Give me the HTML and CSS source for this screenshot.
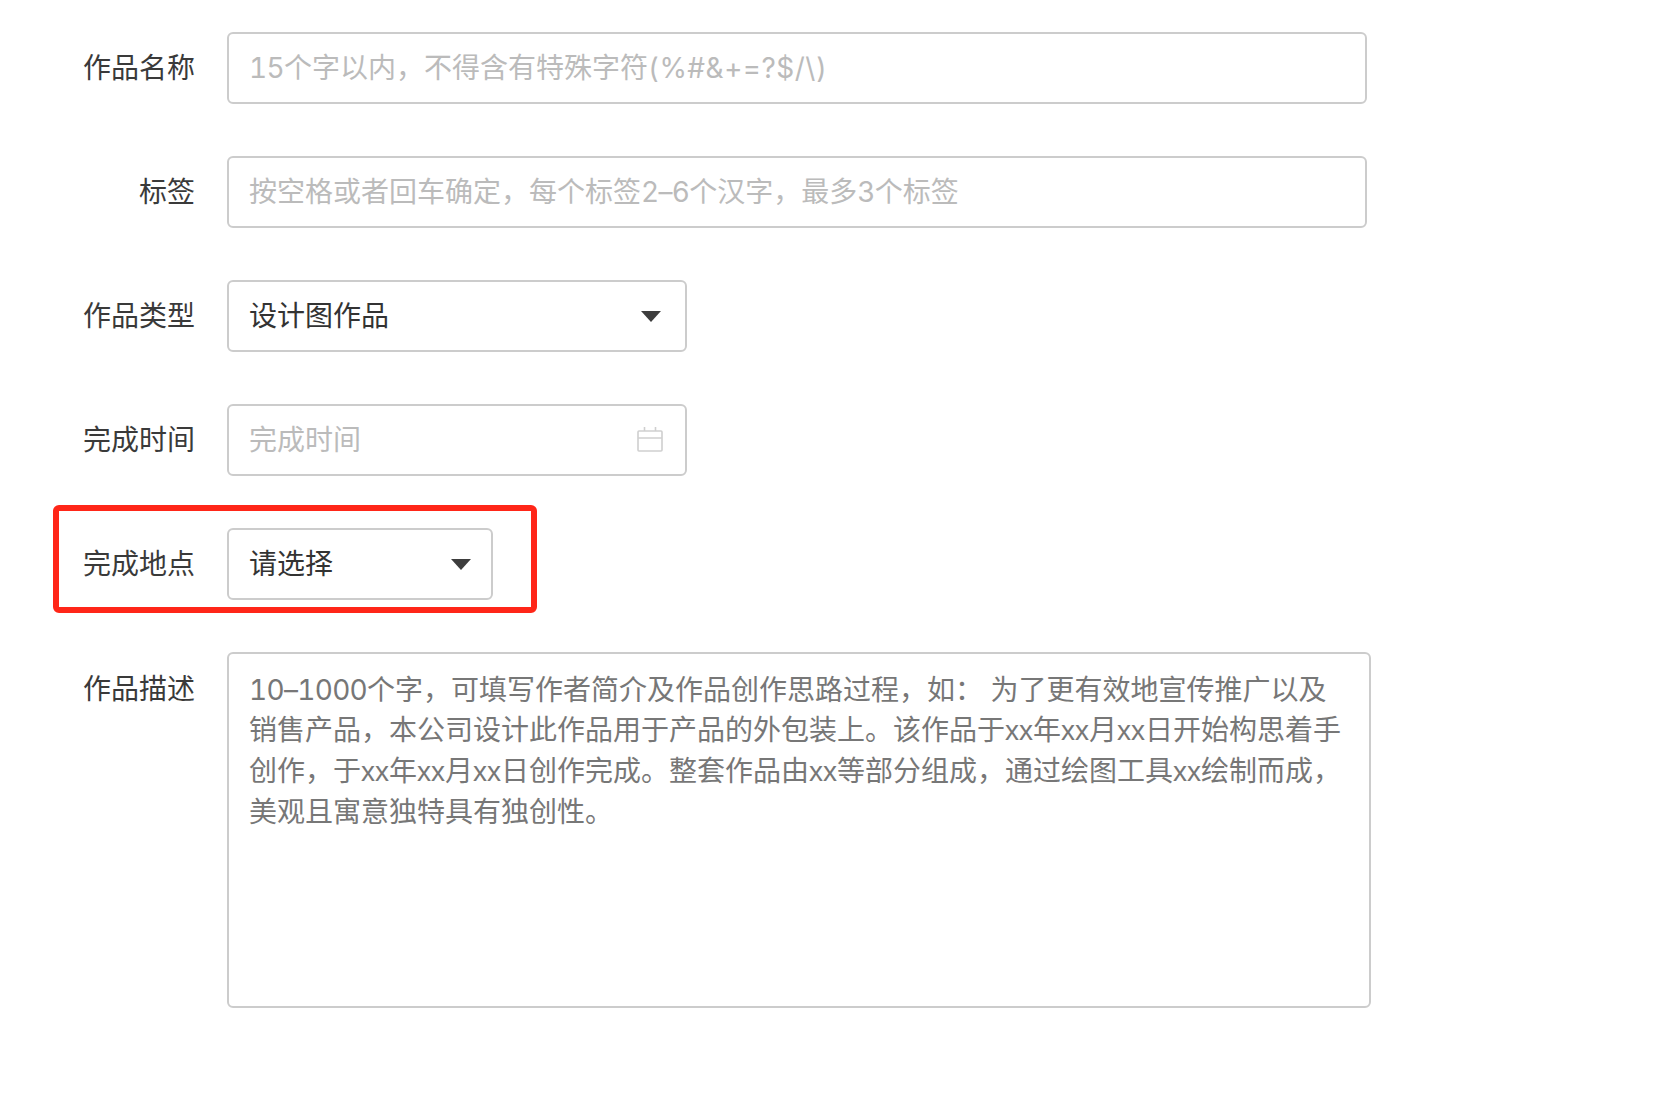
FILE: index.html
```html
<!DOCTYPE html>
<html lang="zh-CN">
<head>
<meta charset="utf-8">
<title>作品信息</title>
<link rel="stylesheet" href="styles.css">
</head>
<body>
<form class="form">
  <div class="row">
    <div class="label">作品名称</div>
    <div class="field field-wide placeholder"><span><span class="num">15</span>个字以内&#xFF0C;不得含有特殊字符<span class="sym">(%#&amp;+=?$/\)</span></span></div>
  </div>
  <div class="row">
    <div class="label">标签</div>
    <div class="field field-wide placeholder"><span>按空格或者回车确定&#xFF0C;每个标签<span class="num">2–6</span>个汉字&#xFF0C;最多<span class="num">3</span>个标签</span></div>
  </div>
  <div class="row">
    <div class="label">作品类型</div>
    <div class="field field-mid">
      <span>设计图作品</span>
      <span class="caret caret-mid"></span>
    </div>
  </div>
  <div class="row">
    <div class="label">完成时间</div>
    <div class="field field-mid placeholder">
      <span>完成时间</span>
      <svg class="cal" width="26" height="26" viewBox="0 0 26 26" fill="none" stroke="#cfcfcf" stroke-width="1.6">
        <rect x="1" y="4" width="24" height="20" rx="1"/>
        <path d="M1 11H25M7.5 0V4M18.5 0V4"/>
      </svg>
    </div>
  </div>
  <div class="row">
    <div class="highlight"></div>
    <div class="label">完成地点</div>
    <div class="field field-small">
      <span>请选择</span>
      <span class="caret caret-small"></span>
    </div>
  </div>
  <div class="row row-top">
    <div class="label label-top">作品描述</div>
    <div class="area"><span class="num">10–1000</span>个字&#xFF0C;可填写作者简介及作品创作思路过程&#xFF0C;如&#xFF1A; 为了更有效地宣传推广以及销售产品&#xFF0C;本公司设计此作品用于产品的外包装上。该作品于<span class="lat">xx</span>年<span class="lat">xx</span>月<span class="lat">xx</span>日开始构思着手创作&#xFF0C;于<span class="lat">xx</span>年<span class="lat">xx</span>月<span class="lat">xx</span>日创作完成。整套作品由<span class="lat">xx</span>等部分组成&#xFF0C;通过绘图工具<span class="lat">xx</span>绘制而成&#xFF0C;美观且寓意独特具有独创性。</div>
  </div>
</form>
</body>
</html>
```

FILE: styles.css
```css
* {
  box-sizing: border-box;
}

html,
body {
  margin: 0;
  background: #ffffff;
}

body {
  font-family: "Inter", "Noto Sans CJK SC", sans-serif;
  font-size: 28px;
  font-variant-numeric: tabular-nums;
  line-height: 40px;
  color: #333333;
}

.num {
  letter-spacing: -0.7px;
}

.sym {
  letter-spacing: 0.5px;
}

.lat {
  font-family: "Liberation Sans", sans-serif;
}

.form {
  display: flex;
  flex-direction: column;
  gap: 52px;
  padding: 32px 0 0 0;
}

.row {
  position: relative;
  display: flex;
  align-items: center;
  gap: 32px;
}

.row-top {
  align-items: flex-start;
}

.label {
  width: 195px;
  text-align: right;
  color: #3a3a3a;
  flex: none;
}

.label-top {
  padding-top: 17px;
}

.field {
  display: flex;
  align-items: center;
  justify-content: space-between;
  height: 72px;
  padding: 0 20px;
  border: 2px solid #cccccc;
  border-radius: 6px;
  background: #ffffff;
  flex: none;
}

.field-wide {
  width: 1140px;
}

.field-mid {
  width: 460px;
}

.field-small {
  width: 266px;
}

.placeholder {
  color: #bbbbbb;
}

.caret {
  width: 0;
  height: 0;
  border-left: 10.5px solid transparent;
  border-right: 10.5px solid transparent;
  border-top: 11px solid #3d3d3d;
}

.caret-mid {
  margin-right: 4px;
}

.caret-small {
  margin-right: 0;
}

.cal {
  margin-right: 2px;
}

.area {
  width: 1144px;
  height: 356px;
  padding: 16px 20px;
  border: 2px solid #cccccc;
  border-radius: 6px;
  color: #777777;
  line-height: 40px;
  flex: none;
}

.highlight {
  position: absolute;
  left: 53px;
  top: -23px;
  width: 484px;
  height: 108px;
  border: 6px solid #ff2618;
  border-radius: 6px;
  pointer-events: none;
}
```
